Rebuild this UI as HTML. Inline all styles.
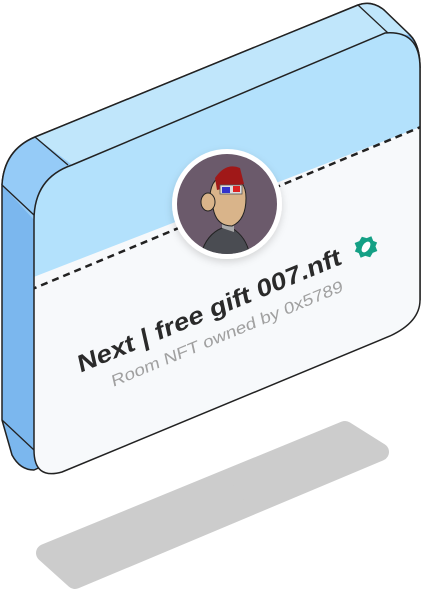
<!DOCTYPE html>
<html><head><meta charset="utf-8"><style>
html,body{margin:0;padding:0;background:#fff;width:423px;height:607px;overflow:hidden}
svg{display:block}
</style></head><body>
<svg width="423" height="607" viewBox="0 0 423 607" xmlns="http://www.w3.org/2000/svg">
<defs>
<clipPath id="front"><path d="M34,220 Q34,178 72,165 L385,33 Q420,30 420,68 L420,300 Q420,322 390,336 L62,472 Q34,480 34,450 Z"/></clipPath>
<clipPath id="av"><circle cx="227" cy="204" r="50"/></clipPath>
<filter id="sh" x="-30%" y="-30%" width="160%" height="160%"><feDropShadow dx="0" dy="3" stdDeviation="4" flood-color="#000" flood-opacity="0.15"/></filter>
</defs>
<polygon points="45,553 345,430 380,452 75,580" fill="#cccccc" stroke="#cccccc" stroke-width="18" stroke-linejoin="round"/>
<path d="M2,185 Q4,150 35,137 L358,5 Q372,0 384,10 L410,35 Q420,45 420,68 L420,300 L34,470 Q20,470 12,455 L2,420 Z" fill="#7bb7ee" stroke="#222" stroke-width="1.5" stroke-linejoin="round"/>
<path d="M35,137 L358,5 Q372,0 384,10 L410,35 L385,33 L72,165 Z" fill="#c0e6fb"/>
<path d="M2,185 Q4,150 35,137 L72,165 Q34,178 34,220 Z" fill="#95cbf7"/>
<path d="M2,185 L34,215" stroke="#222" stroke-width="1.3"/>
<path d="M35,137 L68,165" stroke="#222" stroke-width="1.3"/>
<path d="M358,5 L388,33" stroke="#222" stroke-width="1.3"/>
<path d="M2,420 L34,450" stroke="#222" stroke-width="1.3"/>
<path d="M2,185 Q4,150 35,137 L358,5 Q372,0 384,10 L410,35 Q420,45 420,68" fill="none" stroke="#222" stroke-width="1.5"/>
<g clip-path="url(#front)">
<rect x="0" y="0" width="423" height="607" fill="#f7f9fb"/>
<polygon points="0,0 423,0 423,126 0,290" fill="#b3e1fc"/>
<line x1="30" y1="290" x2="423" y2="126" stroke="#222" stroke-width="2.5" stroke-dasharray="7,5"/>
</g>
<path d="M34,220 Q34,178 72,165 L385,33 Q420,30 420,68 L420,300 Q420,322 390,336 L62,472 Q34,480 34,450 Z" fill="none" stroke="#222" stroke-width="1.5"/>
<circle cx="227" cy="204" r="55" fill="#fff" filter="url(#sh)"/>
<circle cx="227" cy="204" r="50" fill="#6b5a6b"/>
<g clip-path="url(#av)">
<path d="M200,258 Q205,235 222,228 L232,228 Q248,238 250,258 Z" fill="#4a4c52" stroke="#222" stroke-width="1"/>
<path d="M222,228 L222,215 L234,215 L234,232 Z" fill="#aaa"/>
<path d="M210,195 Q212,175 228,176 Q246,178 246,198 Q246,220 232,226 Q218,226 214,212 Z" fill="#d9b48a" stroke="#222" stroke-width="1"/>
<ellipse cx="208" cy="202" rx="7" ry="9" fill="#d9b48a" stroke="#222" stroke-width="1"/>
<path d="M215,178 Q226,162 240,168 L244,184 L217,190 Z" fill="#a01818"/>
<rect x="220" y="185" width="22" height="9" fill="#ddd" stroke="#555" stroke-width="0.8"/>
<rect x="222" y="187" width="8" height="6" fill="#3333cc"/>
<rect x="233" y="186" width="7" height="6" fill="#dd2222"/>
</g>
<g transform="translate(80,373) rotate(-22.6) skewX(-10)">
<text x="0" y="0" font-family="Liberation Sans, sans-serif" font-weight="bold" font-size="24" fill="#2a2a2a" textLength="284" lengthAdjust="spacingAndGlyphs">Next | free gift 007.nft</text>
</g>
<g transform="translate(113,387) rotate(-22.6) skewX(-10)">
<text x="0" y="0" font-family="Liberation Sans, sans-serif" font-size="16" fill="#a0a0a0" textLength="250" lengthAdjust="spacingAndGlyphs">Room NFT owned by 0x5789</text>
</g>
<g transform="translate(366,247) rotate(-22)">
<path d="M0,-11 L4,-8 L9,-8 L9,-3 L12,0 L9,3 L9,8 L4,8 L0,11 L-4,8 L-9,8 L-9,3 L-12,0 L-9,-3 L-9,-8 L-4,-8 Z" fill="#14a085"/>
<ellipse cx="0" cy="0" rx="6" ry="3.5" fill="#fff" transform="rotate(-35)"/>
</g>
</svg>
</body></html>
